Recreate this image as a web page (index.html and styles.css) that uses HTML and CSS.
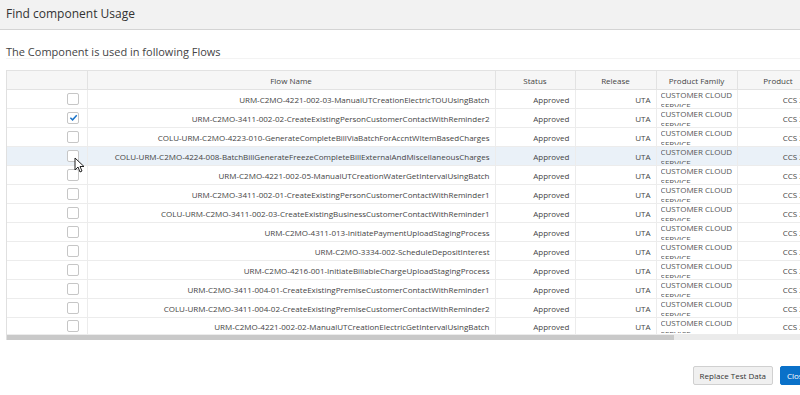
FILE: index.html
```html
<!DOCTYPE html>
<html lang="en">
<head>
  <meta charset="UTF-8">
  <title>Find component Usage</title>
  <link rel="stylesheet" href="styles.css">
</head>
<body>
  <div class="dialog">
    <div class="dialog-header">Find component Usage</div>

    <div class="dialog-body">
      <p class="subtitle">The Component is used in following Flows</p>

      <div class="table-wrap">
        <table class="flows">
          <colgroup>
            <col class="c-check">
            <col class="c-name">
            <col class="c-status">
            <col class="c-release">
            <col class="c-family">
            <col class="c-product">
          </colgroup>
          <thead>
            <tr>
              <th></th>
              <th>Flow Name</th>
              <th>Status</th>
              <th>Release</th>
              <th>Product Family</th>
              <th>Product</th>
            </tr>
          </thead>
          <tbody>
            <tr>
              <td class="check"><span class="box"></span></td>
              <td class="name">URM-C2MO-4221-002-03-ManualUTCreationElectricTOUUsingBatch</td>
              <td class="num">Approved</td>
              <td class="num">UTA</td>
              <td class="family"><div>CUSTOMER CLOUD SERVICE</div></td>
              <td class="num">CCS 22B</td>
            </tr>
            <tr>
              <td class="check"><span class="box checked"><svg viewBox="0 0 10 10" width="9" height="9"><path d="M1.5 5.2 L4 7.6 L8.6 2.4" fill="none" stroke="#1a73c9" stroke-width="1.6"/></svg></span></td>
              <td class="name">URM-C2MO-3411-002-02-CreateExistingPersonCustomerContactWithReminder2</td>
              <td class="num">Approved</td>
              <td class="num">UTA</td>
              <td class="family"><div>CUSTOMER CLOUD SERVICE</div></td>
              <td class="num">CCS 22B</td>
            </tr>
            <tr>
              <td class="check"><span class="box"></span></td>
              <td class="name">COLU-URM-C2MO-4223-010-GenerateCompleteBillViaBatchForAccntWItemBasedCharges</td>
              <td class="num">Approved</td>
              <td class="num">UTA</td>
              <td class="family"><div>CUSTOMER CLOUD SERVICE</div></td>
              <td class="num">CCS 22B</td>
            </tr>
            <tr class="hover">
              <td class="check"><span class="box"></span></td>
              <td class="name">COLU-URM-C2MO-4224-008-BatchBillGenerateFreezeCompleteBillExternalAndMiscellaneousCharges</td>
              <td class="num">Approved</td>
              <td class="num">UTA</td>
              <td class="family"><div>CUSTOMER CLOUD SERVICE</div></td>
              <td class="num">CCS 22B</td>
            </tr>
            <tr>
              <td class="check"><span class="box"></span></td>
              <td class="name">URM-C2MO-4221-002-05-ManualUTCreationWaterGetIntervalUsingBatch</td>
              <td class="num">Approved</td>
              <td class="num">UTA</td>
              <td class="family"><div>CUSTOMER CLOUD SERVICE</div></td>
              <td class="num">CCS 22B</td>
            </tr>
            <tr>
              <td class="check"><span class="box"></span></td>
              <td class="name">URM-C2MO-3411-002-01-CreateExistingPersonCustomerContactWithReminder1</td>
              <td class="num">Approved</td>
              <td class="num">UTA</td>
              <td class="family"><div>CUSTOMER CLOUD SERVICE</div></td>
              <td class="num">CCS 22B</td>
            </tr>
            <tr>
              <td class="check"><span class="box"></span></td>
              <td class="name">COLU-URM-C2MO-3411-002-03-CreateExistingBusinessCustomerContactWithReminder1</td>
              <td class="num">Approved</td>
              <td class="num">UTA</td>
              <td class="family"><div>CUSTOMER CLOUD SERVICE</div></td>
              <td class="num">CCS 22B</td>
            </tr>
            <tr>
              <td class="check"><span class="box"></span></td>
              <td class="name">URM-C2MO-4311-013-InitiatePaymentUploadStagingProcess</td>
              <td class="num">Approved</td>
              <td class="num">UTA</td>
              <td class="family"><div>CUSTOMER CLOUD SERVICE</div></td>
              <td class="num">CCS 22B</td>
            </tr>
            <tr>
              <td class="check"><span class="box"></span></td>
              <td class="name">URM-C2MO-3334-002-ScheduleDepositInterest</td>
              <td class="num">Approved</td>
              <td class="num">UTA</td>
              <td class="family"><div>CUSTOMER CLOUD SERVICE</div></td>
              <td class="num">CCS 22B</td>
            </tr>
            <tr>
              <td class="check"><span class="box"></span></td>
              <td class="name">URM-C2MO-4216-001-InitiateBillableChargeUploadStagingProcess</td>
              <td class="num">Approved</td>
              <td class="num">UTA</td>
              <td class="family"><div>CUSTOMER CLOUD SERVICE</div></td>
              <td class="num">CCS 22B</td>
            </tr>
            <tr>
              <td class="check"><span class="box"></span></td>
              <td class="name">URM-C2MO-3411-004-01-CreateExistingPremiseCustomerContactWithReminder1</td>
              <td class="num">Approved</td>
              <td class="num">UTA</td>
              <td class="family"><div>CUSTOMER CLOUD SERVICE</div></td>
              <td class="num">CCS 22B</td>
            </tr>
            <tr>
              <td class="check"><span class="box"></span></td>
              <td class="name">COLU-URM-C2MO-3411-004-02-CreateExistingPremiseCustomerContactWithReminder2</td>
              <td class="num">Approved</td>
              <td class="num">UTA</td>
              <td class="family"><div>CUSTOMER CLOUD SERVICE</div></td>
              <td class="num">CCS 22B</td>
            </tr>
            <tr>
              <td class="check"><span class="box"></span></td>
              <td class="name">URM-C2MO-4221-002-02-ManualUTCreationElectricGetIntervalUsingBatch</td>
              <td class="num">Approved</td>
              <td class="num">UTA</td>
              <td class="family"><div>CUSTOMER CLOUD SERVICE</div></td>
              <td class="num">CCS 22B</td>
            </tr>
          </tbody>
        </table>
        <div class="hscroll"><div class="thumb"></div></div>

        <!-- mouse pointer over row 4 -->
        <svg class="cursor" viewBox="0 0 10 16" width="10" height="16">
          <path d="M1 1 L1 13 L4 10 L6 15 L8 14 L6 9.5 L10 9.5 Z" fill="#fff" stroke="#222" stroke-width="1"/>
        </svg>
      </div>

      <div class="footer">
        <button class="btn">Replace Test Data</button>
        <button class="btn primary">Close</button>
      </div>
    </div>
  </div>
</body>
</html>
```

FILE: styles.css
```css
body {
  margin: 0;
  overflow: hidden;
  background-color: #fff;
  font-family: "Open Sans", "Noto Sans", Arial, sans-serif;
  color: #333;
}

.dialog {
  width: 839px;
}

.dialog-header {
  height: 30px;
  box-sizing: border-box;
  padding: 5px 6px 0;
  font-size: 12px;
  line-height: 18px;
  color: #333;
  background-color: #f2f2f2;
  border-bottom: 1px solid #d4d4d4;
}

.dialog-body {
  padding: 0 6px;
}

.subtitle {
  margin: 0;
  padding: 14px 0 0;
  height: 29px;
  box-sizing: border-box;
  font-size: 11px;
  line-height: 16px;
  color: #444;
  border-bottom: 1px solid #f3f3f3;
}

.table-wrap {
  position: relative;
  margin-top: 11px;
  border-left: 1px solid #e0e0e0;
}

.flows {
  border-collapse: collapse;
  table-layout: fixed;
  width: 812px;
  font-size: 8px;
  color: #444;
}

.c-check { width: 80px; }
.c-name { width: 408px; }
.c-status { width: 80px; }
.c-release { width: 81px; }
.c-family { width: 81px; }
.c-product { width: 82px; }

.flows th {
  height: 18px;
  padding: 0 4px;
  font-weight: normal;
  text-align: center;
  color: #444;
  background-color: #f6f6f6;
  border: 1px solid #e2e2e2;
  border-left: none;
}

.flows td {
  height: 18px;
  padding: 0 5px;
  white-space: nowrap;
  overflow: hidden;
  border-bottom: 1px solid #ececec;
  border-right: 1px solid #ececec;
}

.flows tr:last-child td {
  height: 16px;
}

.flows tr.hover td {
  background-color: #eaf1f8;
}

.flows td.check {
  text-align: right;
  padding-right: 8px;
}

.box {
  display: inline-block;
  vertical-align: middle;
  width: 10px;
  height: 10px;
  border: 1px solid #c6c6c6;
  border-radius: 2px;
  background-color: #fff;
  position: relative;
}

.box svg {
  position: absolute;
  left: 1px;
  top: 0;
}

.flows td.name,
.flows td.num {
  text-align: right;
}

.flows td.family {
  padding: 0 4px;
  white-space: normal;
}

.flows td.family div {
  height: 18px;
  overflow: hidden;
  font-size: 8px;
  line-height: 11px;
  margin-top: -2px;
  color: #555;
}

.flows tr:last-child td.family div {
  height: 16px;
}

.hscroll {
  height: 5px;
  background-color: #ebebeb;
}

.hscroll .thumb {
  width: 667px;
  height: 5px;
  background-color: #c9c9c9;
}

.cursor {
  position: absolute;
  left: 67px;
  top: 87px;
}

.footer {
  display: flex;
  justify-content: flex-end;
  gap: 7px;
  padding: 26px 5px 0 0;
}

.btn {
  height: 19px;
  padding: 0 6px;
  font-family: inherit;
  font-size: 8px;
  color: #333;
  background-color: #f0f0f0;
  border: 1px solid #d0d0d0;
  border-radius: 2px;
}

.btn.primary {
  width: 48px;
  color: #fff;
  background-color: #0a71c9;
  border-color: #0a71c9;
  text-align: left;
}
```
